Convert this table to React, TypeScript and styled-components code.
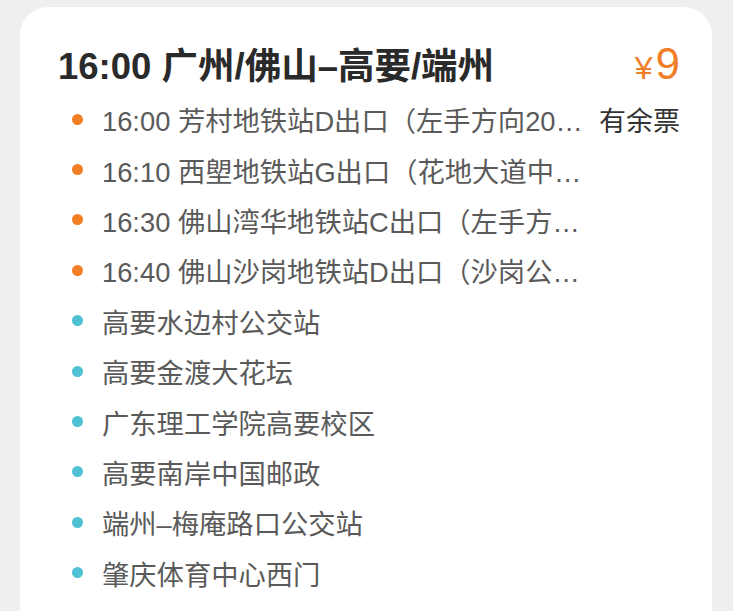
import React from "react";
import styled, { createGlobalStyle } from "styled-components";

const Global = createGlobalStyle`
  html, body {
    margin: 0;
    padding: 0;
    background: #efefef;
    font-family: "Liberation Sans", "Noto Sans CJK SC", sans-serif;
  }
`;

const Page = styled.div`
  height: 611px;
  overflow: hidden;
  padding: 7px 21px 0 20px;
`;

const Card = styled.div`
  background: #ffffff;
  border-radius: 28px;
  padding: 35px 32px 40px 38px;
  min-height: 700px;
`;

const Header = styled.div`
  display: flex;
  align-items: baseline;
  justify-content: space-between;
  height: 44px;
  line-height: 44px;
`;

const Title = styled.div`
  font-size: 36.5px;
  font-weight: 700;
  color: #2a2a2a;
  white-space: nowrap;
`;

const Price = styled.div`
  color: #f07d28;
  font-size: 44px;
  white-space: nowrap;
`;

const Yen = styled.span`
  font-size: 32px;
  margin-right: 3px;
`;

const List = styled.ul`
  list-style: none;
  margin: 8px 0 0 0;
  padding: 0 0 0 14px;
`;

const Row = styled.li`
  display: flex;
  align-items: center;
  height: 50.4px;
`;

const Dot = styled.span<{ $tone: "orange" | "cyan" }>`
  flex: none;
  width: 11px;
  height: 11px;
  border-radius: 50%;
  background: ${(p) => (p.$tone === "orange" ? "#f27f26" : "#4fc1d3")};
  margin-right: 19px;
`;

const StopText = styled.span`
  font-size: 27.3px;
  color: #5a5a5a;
  white-space: nowrap;
`;

const Status = styled.span`
  margin-left: auto;
  font-size: 27px;
  color: #333333;
  white-space: nowrap;
`;

type Stop = { text: string; tone: "orange" | "cyan"; status?: string };

const stops: Stop[] = [
  { text: "16:00 芳村地铁站D出口（左手方向20…", tone: "orange", status: "有余票" },
  { text: "16:10 西塱地铁站G出口（花地大道中…", tone: "orange" },
  { text: "16:30 佛山湾华地铁站C出口（左手方…", tone: "orange" },
  { text: "16:40 佛山沙岗地铁站D出口（沙岗公…", tone: "orange" },
  { text: "高要水边村公交站", tone: "cyan" },
  { text: "高要金渡大花坛", tone: "cyan" },
  { text: "广东理工学院高要校区", tone: "cyan" },
  { text: "高要南岸中国邮政", tone: "cyan" },
  { text: "端州–梅庵路口公交站", tone: "cyan" },
  { text: "肇庆体育中心西门", tone: "cyan" },
];

export default function App() {
  return (
    <>
      <Global />
      <Page>
        <Card>
          <Header>
            <Title>16:00 广州/佛山–高要/端州</Title>
            <Price>
              <Yen>¥</Yen>9
            </Price>
          </Header>
          <List>
            {stops.map((s, i) => (
              <Row key={i}>
                <Dot $tone={s.tone} />
                <StopText>{s.text}</StopText>
                {s.status && <Status>{s.status}</Status>}
              </Row>
            ))}
          </List>
        </Card>
      </Page>
    </>
  );
}
